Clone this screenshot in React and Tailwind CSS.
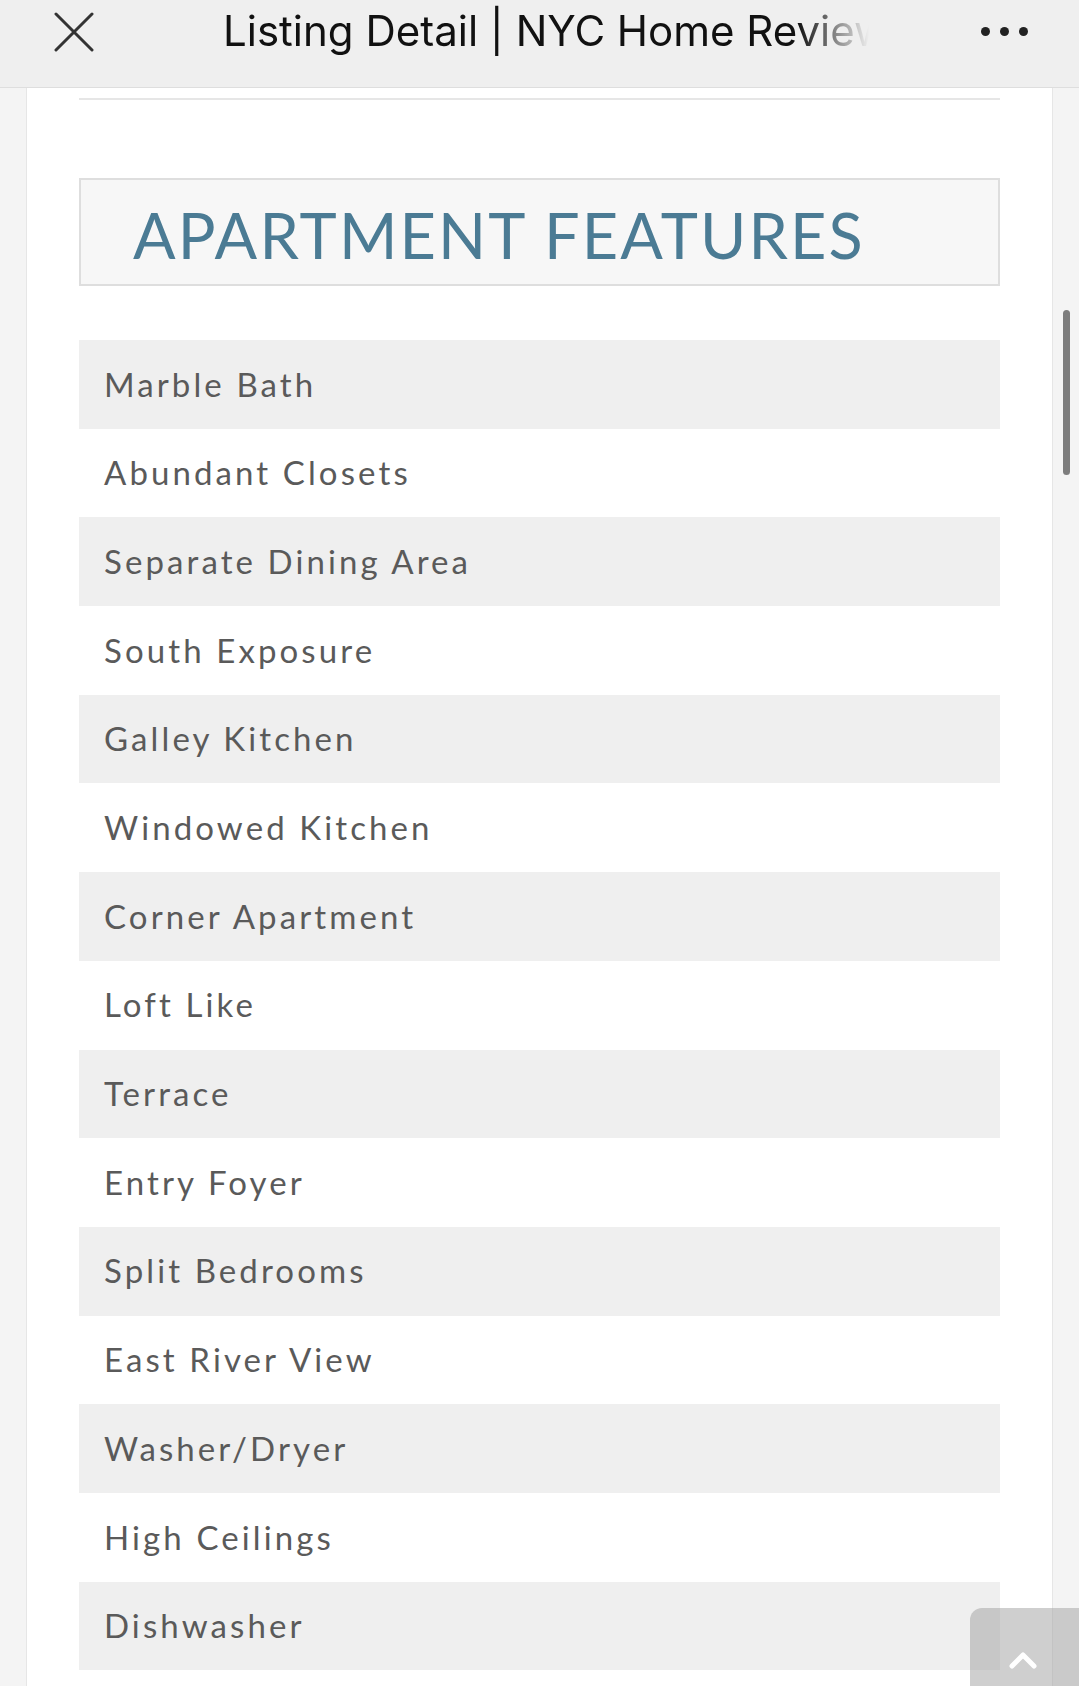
const features = [
  "Marble Bath",
  "Abundant Closets",
  "Separate Dining Area",
  "South Exposure",
  "Galley Kitchen",
  "Windowed Kitchen",
  "Corner Apartment",
  "Loft Like",
  "Terrace",
  "Entry Foyer",
  "Split Bedrooms",
  "East River View",
  "Washer/Dryer",
  "High Ceilings",
  "Dishwasher",
  "Doorman",
];

function Header() {
  return (
    <div className="h-[88px] shrink-0 bg-[#efefef] border-b border-[#dedede] flex items-center relative">
      <svg className="ml-[54px] w-[40px] h-[40px] -mt-[24px]" viewBox="0 0 40 40">
        <path d="M2 2 L38 38 M38 2 L2 38" stroke="#333" strokeWidth="3" strokeLinecap="round" fill="none" />
      </svg>
      <div
        className="ml-[129px] -mt-[24px] w-[646px] overflow-hidden whitespace-nowrap text-[42px] leading-[1.3] text-[#111] [mask-image:linear-gradient(to_right,black_89%,transparent)]"
        style={{ fontFamily: "Inter, 'Liberation Sans', sans-serif" }}
      >
        Listing Detail | NYC Home Reviews
      </div>
      <div className="ml-auto mr-[51px] -mt-[24px] flex gap-[10px]">
        <span className="w-[9px] h-[9px] rounded-full bg-[#222]" />
        <span className="w-[9px] h-[9px] rounded-full bg-[#222]" />
        <span className="w-[9px] h-[9px] rounded-full bg-[#222]" />
      </div>
    </div>
  );
}

export default function App() {
  return (
    <div
      className="w-[1079px] h-[1686px] overflow-hidden relative bg-[#f4f4f4] flex flex-col"
      style={{ fontFamily: "Lato, 'Open Sans', sans-serif" }}
    >
      <Header />
      <div className="flex-1 flex">
        <div className="ml-[26px] w-[1027px] bg-white border-x border-[#e6e6e6] px-[52px] pt-[10px]">
          <div className="h-[2px] bg-[#e6e6e6]" />
          <div className="mt-[78px] h-[108px] border-2 border-[#dedede] bg-[#f7f7f7] flex items-center pl-[52px]">
            <h2 className="text-[63px] leading-none tracking-[0.034em] text-[#4b7b94] pt-[4px]">
              APARTMENT FEATURES
            </h2>
          </div>
          <ul className="mt-[54px]">
            {features.map((f, i) => (
              <li
                key={i}
                className={`h-[88.7px] flex items-center pl-[25px] text-[33px] tracking-[0.094em] text-[#5a5a5a] ${i % 2 === 0 ? "bg-[#efefef]" : "bg-white"}`}
              >
                {f}
              </li>
            ))}
          </ul>
        </div>
      </div>
      <div className="absolute left-[1063px] top-[310px] w-[7px] h-[165px] rounded-full bg-[#7d7d7d]" />
      <div className="absolute left-[970px] top-[1608px] w-[120px] h-[90px] rounded-t-[12px] bg-[#a0a0a0]/50 flex justify-start">
        <svg className="ml-[38px] mt-[42px] w-[30px] h-[20px]" viewBox="0 0 30 20">
          <path d="M4 16 L15 5 L26 16" stroke="white" strokeWidth="5" strokeLinecap="round" strokeLinejoin="round" fill="none" />
        </svg>
      </div>
    </div>
  );
}
